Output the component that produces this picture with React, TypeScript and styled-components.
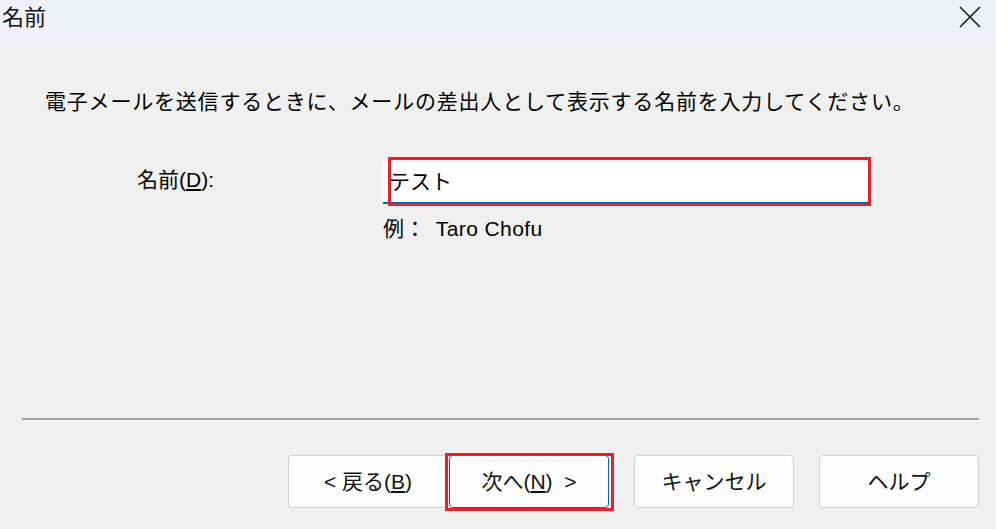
import React from "react";
import styled, { createGlobalStyle } from "styled-components";

const Global = createGlobalStyle`
  html, body { margin: 0; padding: 0; background: #f0f0f0; }
  body { font-family: "Liberation Sans", "Noto Sans CJK JP", sans-serif; color: #000; }
  * { box-sizing: border-box; }
`;

const Window = styled.div`
  width: 996px;
  height: 529px;
  display: flex;
  flex-direction: column;
  background: #f0f0f0;
  overflow: hidden;
`;

const TitleBar = styled.div`
  height: 41px;
  flex: none;
  display: flex;
  align-items: center;
  justify-content: space-between;
  background: #f0f1f8;
  padding: 0 15px 0 2px;
`;

const Title = styled.div`
  font-size: 22px;
  line-height: 1;
  margin-top: -6px;
  color: #111;
`;

const CloseIcon = styled.svg`
  width: 22px;
  height: 22px;
  margin-top: -7px;
`;

const Content = styled.div`
  flex: 1;
  padding: 47px 0 0 45px;
  display: flex;
  flex-direction: column;
`;

const Intro = styled.div`
  font-size: 21px;
  line-height: 28px;
  white-space: nowrap;
  letter-spacing: 0.8px;
`;

const FormGrid = styled.div`
  margin-top: 46px;
  display: grid;
  grid-template-columns: 246px 485px;
  padding-left: 92px;
  row-gap: 11px;
  align-items: center;
`;

const Label = styled.div`
  font-size: 21px;
  line-height: 28px;
  margin-top: -6px;
`;

const InputWrap = styled.div`
  position: relative;
  height: 42px;
`;

const InputBox = styled.div`
  height: 42px;
  background: #fff;
  border-bottom: 2px solid #0067c0;
  font-size: 21px;
  line-height: 30px;
  padding: 3px 0 0 6px;
  font-family: "Noto Sans CJK JP", sans-serif;
`;

const Highlight = styled.div<{ $l: number; $t: number; $w: number; $h: number }>`
  position: absolute;
  left: ${(p) => p.$l}px;
  top: ${(p) => p.$t}px;
  width: ${(p) => p.$w}px;
  height: ${(p) => p.$h}px;
  border: 3px solid #e8202a;
  pointer-events: none;
`;

const Example = styled.div`
  grid-column: 2;
  font-size: 21px;
  line-height: 28px;
  display: flex;
  gap: 10px;
  letter-spacing: 0.4px;
`;

const Separator = styled.div`
  margin: 0 17px 0 22px;
  height: 3px;
  border-top: 2px solid #a0a0a0;
  border-bottom: 1px solid #ffffff;
  border-left: 1px solid #a0a0a0;
  flex: none;
`;

const Footer = styled.div`
  flex: none;
  display: flex;
  justify-content: flex-end;
  align-items: center;
  gap: 25px;
  padding: 34px 17px 21px 0;
`;

const Pair = styled.div`
  display: flex;
  gap: 1px;
`;

const ButtonWrap = styled.div`
  position: relative;
`;

const Button = styled.button<{ $focus?: boolean }>`
  width: 160px;
  height: 53px;
  background: #fdfdfd;
  border: 1px solid ${(p) => (p.$focus ? "#0067c0" : "#d0d0d0")};
  border-radius: 4px;
  font-family: "Liberation Sans", "Noto Sans CJK JP", sans-serif;
  font-size: 21px;
  line-height: 51px;
  color: #111;
  padding: 0;
  text-align: center;
  white-space: pre;
`;

export default function App() {
  return (
    <>
      <Global />
      <Window>
        <TitleBar>
          <Title>名前</Title>
          <CloseIcon viewBox="0 0 22 22">
            <path d="M1 1 L21 21 M21 1 L1 21" stroke="#1a1a1a" strokeWidth="1.6" fill="none" />
          </CloseIcon>
        </TitleBar>
        <Content>
          <Intro>電子メールを送信するときに、メールの差出人として表示する名前を入力してください。</Intro>
          <FormGrid>
            <Label>
              名前(<u>D</u>):
            </Label>
            <InputWrap>
              <InputBox>テスト</InputBox>
              <Highlight $l={5} $t={-5} $w={483} $h={49} />
            </InputWrap>
            <Example>
              <span>例：</span>
              <span>Taro Chofu</span>
            </Example>
          </FormGrid>
        </Content>
        <Separator />
        <Footer>
          <Pair>
            <Button>
              {"< "}戻る(<u>B</u>)
            </Button>
            <ButtonWrap>
              <Button $focus>
                次へ(<u>N</u>){"  >"}
              </Button>
              <Highlight $l={-4} $t={-2} $w={169} $h={58} />
            </ButtonWrap>
          </Pair>
          <Button>キャンセル</Button>
          <Button>ヘルプ</Button>
        </Footer>
      </Window>
    </>
  );
}
